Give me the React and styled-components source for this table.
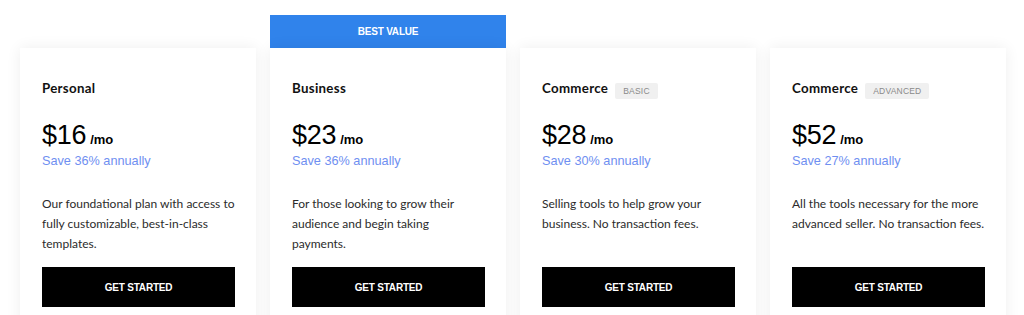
import React from "react";
import styled, { createGlobalStyle } from "styled-components";

const Global = createGlobalStyle`
  html, body { margin: 0; padding: 0; background: #ffffff; }
  body { font-family: "Liberation Sans", Arial, sans-serif; }
`;

const Row = styled.div`
  display: flex;
  gap: 14px;
  padding: 15px 18px 0 20px;
  align-items: flex-start;
`;

const Column = styled.div`
  width: 236px;
  display: flex;
  flex-direction: column;
`;

const Banner = styled.div`
  height: 33px;
  background: ${(p) => (p.$show ? "#3083eb" : "transparent")};
  color: #ffffff;
  font-family: "Liberation Sans", Arial, sans-serif;
  font-weight: 700;
  font-size: 10px;
  letter-spacing: -0.2px;
  display: flex;
  align-items: center;
  justify-content: center;
`;

const Card = styled.div`
  background: #ffffff;
  box-shadow: 0 0 14px rgba(0, 0, 0, 0.07);
  padding: 32px 20px 30px 22px;
  height: 300px;
`;

const TitleRow = styled.div`
  display: flex;
  align-items: center;
  gap: 7px;
  height: 16px;
`;

const Title = styled.div`
  font-family: "Lato", sans-serif;
  font-weight: 700;
  font-size: 13.3px;
  letter-spacing: 0.3px;
  color: #111111;
`;

const Badge = styled.span`
  background: #f0f0f0;
  color: #8a8a8a;
  font-family: "Liberation Sans", Arial, sans-serif;
  font-size: 8.5px;
  letter-spacing: 0.2px;
  padding: 3px 8px;
  border-radius: 2px;
  transform: translateY(3px);
`;

const PriceRow = styled.div`
  margin-top: 22px;
  display: flex;
  align-items: baseline;
  gap: 4px;
  color: #000000;
`;

const Amount = styled.span`
  font-family: "Liberation Sans", Arial, sans-serif;
  font-size: 27px;
  line-height: 34px;
  letter-spacing: -0.3px;
`;

const Per = styled.span`
  font-family: "Liberation Sans", Arial, sans-serif;
  font-weight: 700;
  font-size: 13px;
`;

const Save = styled.div`
  font-family: "Liberation Sans", Arial, sans-serif;
  font-size: 12.7px;
  line-height: 16px;
  margin-top: 1px;
  color: #6f8ff1;
`;

const Desc = styled.p`
  margin: 25px 0 0 0;
  max-width: 193.5px;
  font-family: "Lato", sans-serif;
  font-size: 12px;
  line-height: 20px;
  color: #2b2b2b;
  min-height: 60px;
`;

const Button = styled.button`
  margin-top: 13px;
  width: 193px;
  height: 40px;
  border: none;
  background: #000000;
  color: #ffffff;
  font-family: "Liberation Sans", Arial, sans-serif;
  font-weight: 700;
  font-size: 10px;
  letter-spacing: -0.2px;
  cursor: pointer;
`;

const plans = [
  { name: "Personal", price: "$16", save: "Save 36% annually", desc: "Our foundational plan with access to fully customizable, best-in-class templates." },
  { name: "Business", price: "$23", save: "Save 36% annually", desc: "For those looking to grow their audience and begin taking payments.", best: true },
  { name: "Commerce", badge: "BASIC", price: "$28", save: "Save 30% annually", desc: "Selling tools to help grow your business. No transaction fees." },
  { name: "Commerce", badge: "ADVANCED", price: "$52", save: "Save 27% annually", desc: "All the tools necessary for the more advanced seller. No transaction fees." },
];

export default function App() {
  return (
    <>
      <Global />
      <Row>
        {plans.map((p, i) => (
          <Column key={i}>
            <Banner $show={p.best}>{p.best ? "BEST VALUE" : ""}</Banner>
            <Card>
              <TitleRow>
                <Title>{p.name}</Title>
                {p.badge && <Badge>{p.badge}</Badge>}
              </TitleRow>
              <PriceRow>
                <Amount>{p.price}</Amount>
                <Per>/mo</Per>
              </PriceRow>
              <Save>{p.save}</Save>
              <Desc>{p.desc}</Desc>
              <Button>GET STARTED</Button>
            </Card>
          </Column>
        ))}
      </Row>
    </>
  );
}
